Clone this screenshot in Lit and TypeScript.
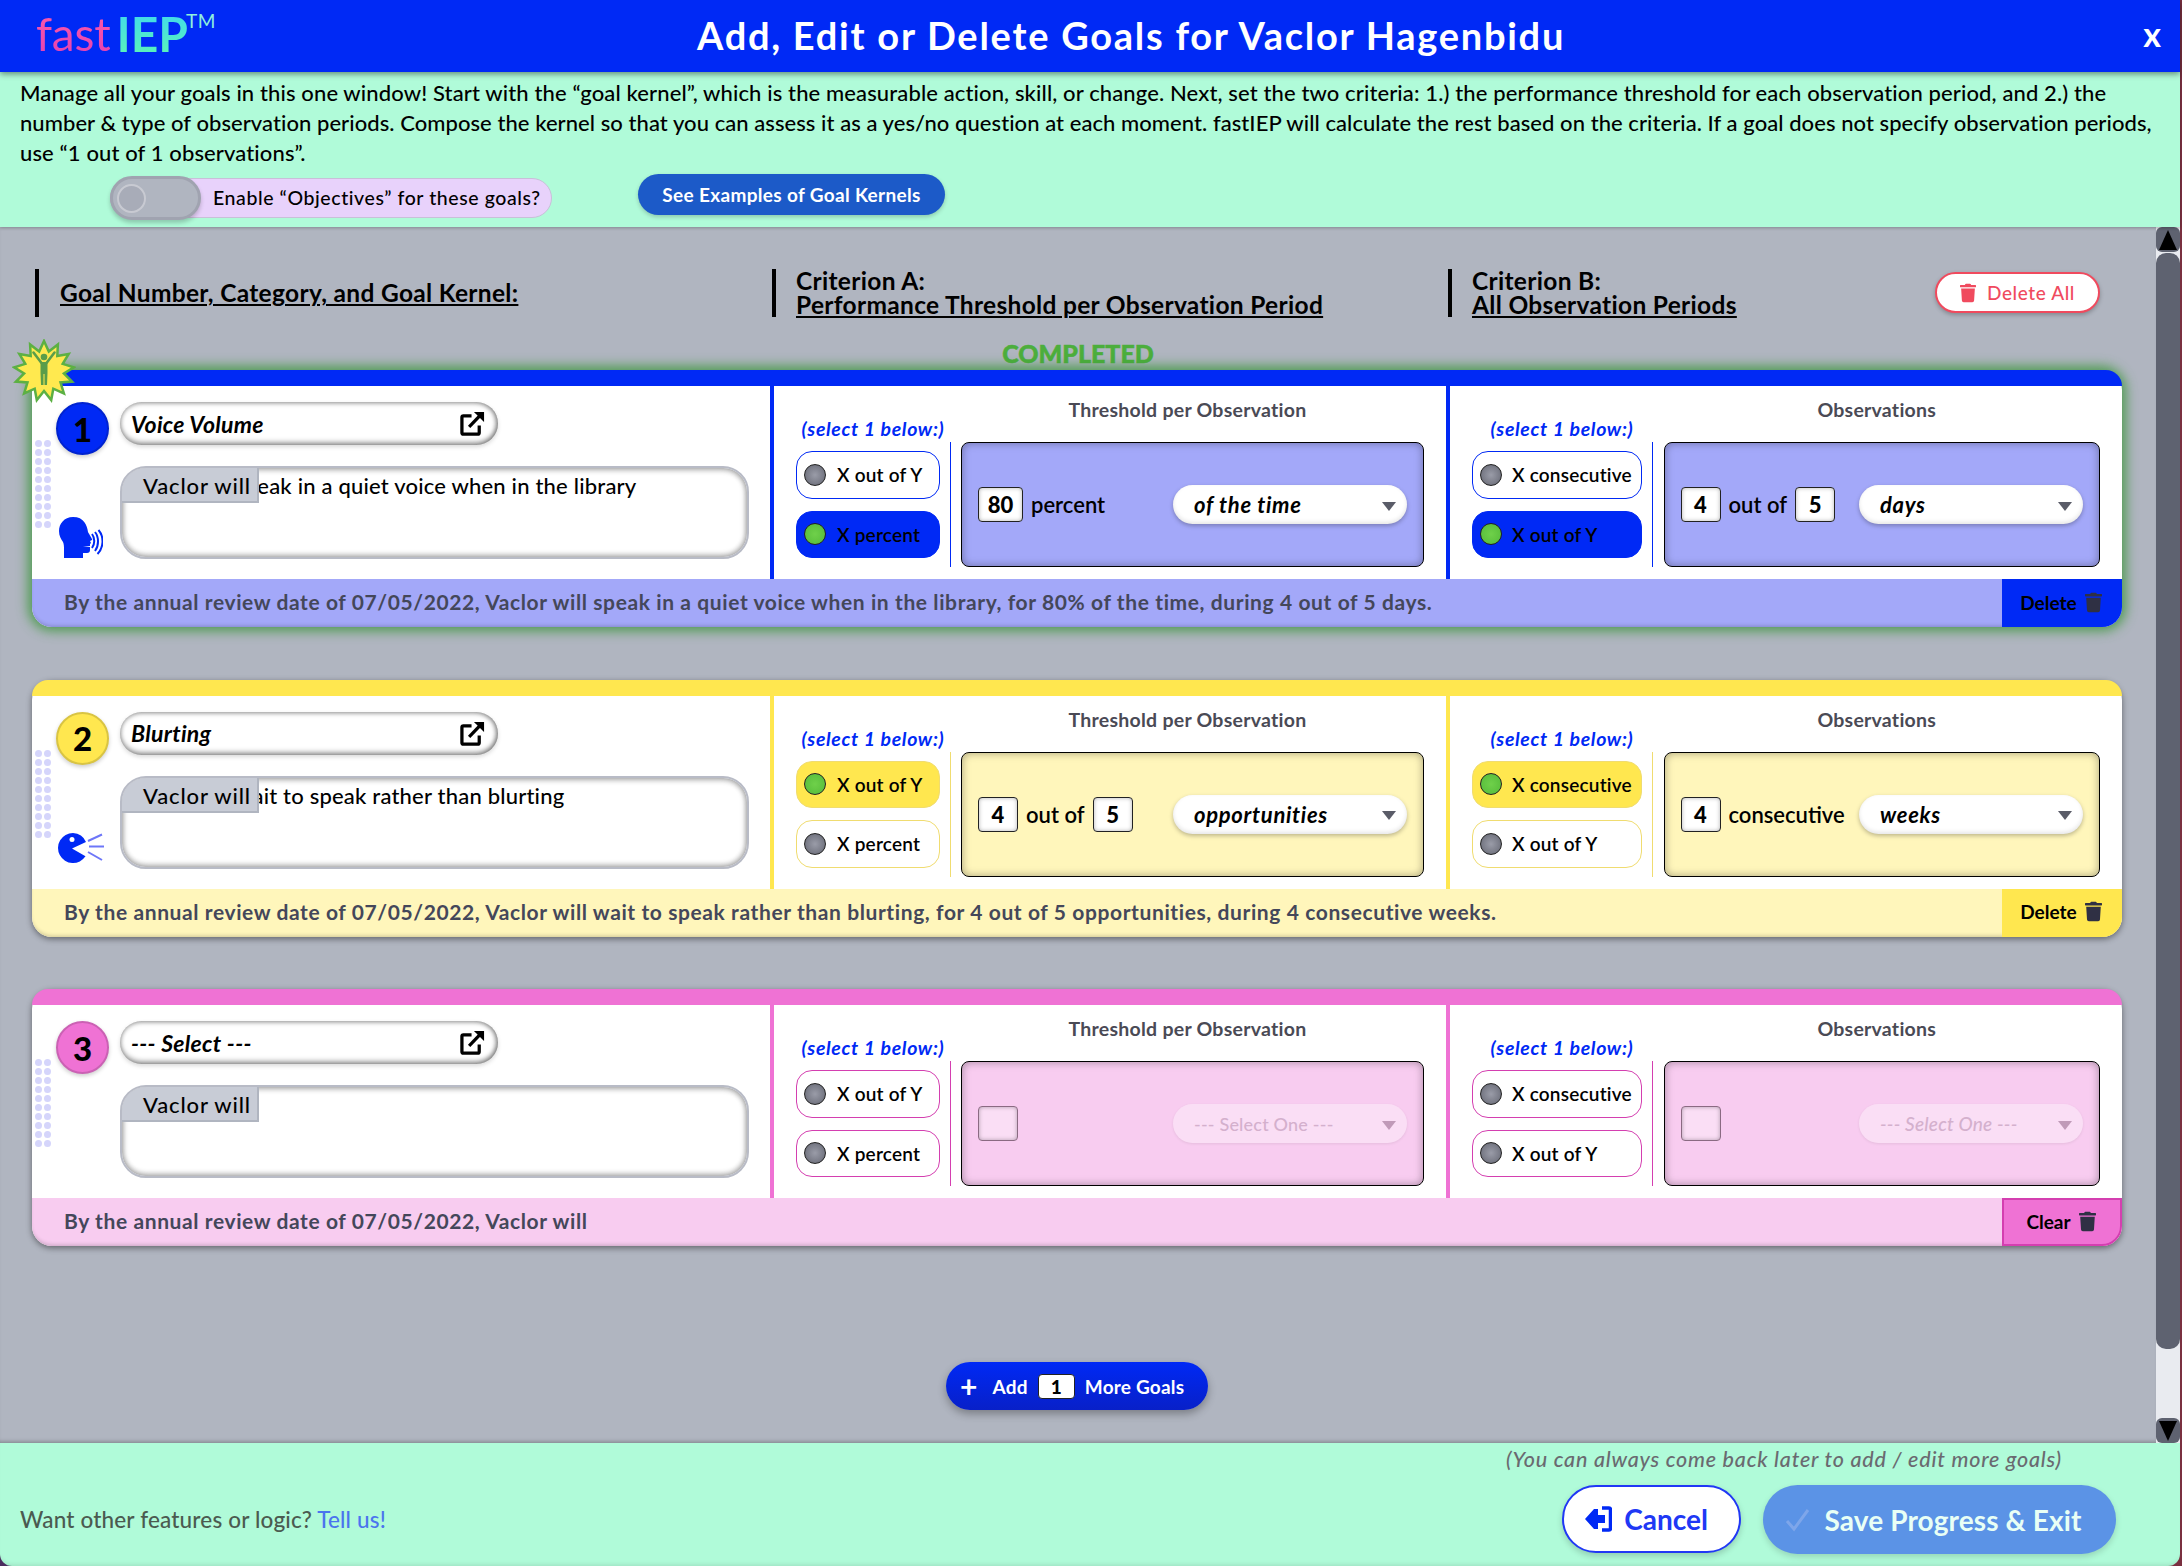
import { LitElement, html, css, svg } from "lit";
import { customElement } from "lit/decorators.js";

const trash = html`<svg class="trash" viewBox="0 0 448 512"><path fill="currentColor" d="M432 32H312l-9.4-18.7A24 24 0 0 0 281.1 0H166.8a23.72 23.72 0 0 0-21.4 13.3L136 32H16A16 16 0 0 0 0 48v32a16 16 0 0 0 16 16h416a16 16 0 0 0 16-16V48a16 16 0 0 0-16-16zM53.2 467a48 48 0 0 0 47.9 45h245.8a48 48 0 0 0 47.9-45L416 128H32z"/></svg>`;

const extLink = html`<svg class="ext" viewBox="0 0 26 26" fill="none" stroke="#000" stroke-width="3.4"><path d="M12 5H3.500a1.500 1.500 0 0 0-1.500 1.500V22.500A1.500 1.500 0 0 0 3.500 24H18.500a1.500 1.500 0 0 0 1.500-1.500V15"/><path d="M9.500 16.500 L21 4.500"/><path d="M14.500 1 H25 V11.500 Z" stroke="none" fill="#000"/></svg>`;

const headIcon = html`<svg class="cat-icon" viewBox="0 0 44 42"><path fill="#0029f5" d="M14 0C5 0 0 7 0 14c0 5 2 8 4 11 1 2 1 5 1 8v8h19v-5h4c2 0 3-1 3-3v-3l-7-1h7v-2l1-1-1-2 2-1c1 0-3-6-4-8C28 8 25 0 14 0z"/><g fill="none" stroke="#0029f5" stroke-width="2"><path d="M33 17c3 4 3 10 0 14" /><path d="M36 15c4 5 4 14 0 19" /><path d="M39.500 13c6 7 5 18 -1 24" /></g></svg>`;

const blurtIcon = html`<svg class="cat-icon blurt" viewBox="0 0 47 31"><path fill="#0029f5" d="M15 0a15 15 0 1 0 12.500 23.300L14 15.500l14-6.500A15 15 0 0 0 15 0z"/><circle cx="14" cy="6.500" r="2.500" fill="#fff"/><g stroke="#6d76f8" stroke-width="2"><path d="M30 8 L44 1.500"/><path d="M31 13.500 H46"/><path d="M30 19 L44 27"/></g></svg>`;

const badge = (() => {
  const pts: string[] = [];
  const n = 13;
  for (let i = 0; i < n * 2; i++) {
    const r = i % 2 === 0 ? 30 : 20;
    const a = (Math.PI * i) / n - Math.PI / 2;
    pts.push(`${(32 + r * Math.cos(a)).toFixed(1)},${(32 + r * Math.sin(a)).toFixed(1)}`);
  }
  return html`<svg class="badge" viewBox="0 0 64 64">
    <polygon points=${pts.join(" ")} fill="#ffe94f" stroke="#5cb043" stroke-width="2.500"/>
    ${svg`<circle cx="32" cy="18" r="3.300" fill="#5a9d4a"/>
    <path d="M21.500 13.500 L29.500 24 M42.500 13.500 L34.500 24" fill="none" stroke="#5a9d4a" stroke-width="2.600" stroke-linecap="round"/>
    <path d="M28.500 23 H35.500 V34 L35 46 H32.500 V35 H31.500 V46 H29 L28.500 34 Z" fill="#5a9d4a"/>`}
  </svg>`;
})();

interface Crit {
  opts: [string, string];
  sel: number;
  title: string;
  inputs: string[];
  joiners: string[];
  select: string;
}
interface Goal {
  n: number;
  theme: string;
  complete?: boolean;
  cat: string;
  kernel: string;
  icon: unknown;
  a: Crit;
  b: Crit;
  summary: string;
  action: string;
}

const goals: Goal[] = [
  {
    n: 1, theme: "blue", complete: true, cat: "Voice Volume",
    kernel: "speak in a quiet voice when in the library", icon: headIcon,
    a: { opts: ["X out of Y", "X percent"], sel: 1, title: "Threshold per Observation", inputs: ["80"], joiners: ["percent"], select: "of the time" },
    b: { opts: ["X consecutive", "X out of Y"], sel: 1, title: "Observations", inputs: ["4", "5"], joiners: ["out of"], select: "days" },
    summary: "By the annual review date of 07/05/2022, Vaclor will speak in a quiet voice when in the library, for 80% of the time, during 4 out of 5 days.",
    action: "Delete",
  },
  {
    n: 2, theme: "yellow", cat: "Blurting",
    kernel: "wait to speak rather than blurting", icon: blurtIcon,
    a: { opts: ["X out of Y", "X percent"], sel: 0, title: "Threshold per Observation", inputs: ["4", "5"], joiners: ["out of"], select: "opportunities" },
    b: { opts: ["X consecutive", "X out of Y"], sel: 0, title: "Observations", inputs: ["4"], joiners: ["consecutive"], select: "weeks" },
    summary: "By the annual review date of 07/05/2022, Vaclor will wait to speak rather than blurting, for 4 out of 5 opportunities, during 4 consecutive weeks.",
    action: "Delete",
  },
  {
    n: 3, theme: "pink", cat: "--- Select ---",
    kernel: "", icon: null,
    a: { opts: ["X out of Y", "X percent"], sel: -1, title: "Threshold per Observation", inputs: [""], joiners: [], select: "" },
    b: { opts: ["X consecutive", "X out of Y"], sel: -1, title: "Observations", inputs: [""], joiners: [], select: "" },
    summary: "By the annual review date of 07/05/2022, Vaclor will",
    action: "Clear",
  },
];

@customElement("app-root")
export class AppRoot extends LitElement {
  static styles = css`
    :host {
      display: block;
      width: 2182px;
      height: 1566px;
      background: linear-gradient(90deg, #4a2d5e, #7a3040);
      font-family: "Lato", "Noto Sans", sans-serif;
      color: #000;
      overflow: hidden;
    }
    * { box-sizing: border-box; }
    .modal { width: 2180px; height: 1566px; display: flex; flex-direction: column; }

    .topbar {
      height: 72px; flex: none; background: #0029f5; position: relative; z-index: 3;
      box-shadow: 0 2px 6px rgba(0,0,0,.45);
      display: flex; align-items: center; justify-content: center; padding: 0 0 3px 82px;
    }
    .logo { position: absolute; left: 36px; top: 9px; font-size: 46px; line-height: 50px; display: flex; }
    .logo .fast { background: linear-gradient(#ff5ca8, #e23fb4); -webkit-background-clip: text; background-clip: text; color: transparent; margin-right: 6px; letter-spacing: -.2px; }
    .logo .iep { background: linear-gradient(#3fd8f0, #5cf5b4); -webkit-background-clip: text; background-clip: text; color: transparent; font-weight: 700; font-size: 48px; }
    .logo sup { font-size: 19px; line-height: 24px; color: #8ff0dc; font-weight: 400; margin-top: 0; margin-left: -2px; letter-spacing: .5px; }
    .title { color: #fff; font-size: 38px; font-weight: 700; letter-spacing: 1.74px; white-space: nowrap; }
    .close { position: absolute; right: 19px; top: 12px; color: #fff; font-size: 34px; font-weight: 700; line-height: 44px; }

    .intro { height: 155px; flex: none; background: #b0fbd9; padding: 6px 20px 0 20px; position: relative; z-index: 2; box-shadow: 0 1px 3px rgba(0,0,0,.25); }
    .intro p { margin: 0; font-size: 22px; line-height: 30px; font-weight: 500; letter-spacing: .12px; white-space: nowrap; }
    .intro p.tight { letter-spacing: .06px; }
    .intro-row { display: flex; align-items: center; margin: 9px 0 0 90px; }
    .toggle { width: 442px; height: 40px; display: flex; align-items: center; position: relative; background: #e8d2fb; border: 1.5px solid #c8c0d8; border-radius: 20px; padding-left: 102px; font-size: 19.500px; font-weight: 500; letter-spacing: .58px; white-space: nowrap; }
    .knob-track { position: absolute; left: -1.500px; top: -3px; width: 91px; height: 44px; border-radius: 22px; background: #b0b5c0; border: 3px solid #a0a3b0; box-shadow: 0 3px 4px rgba(0,0,0,.2); }
    .knob { position: absolute; left: 4px; top: 5px; width: 29px; height: 29px; border-radius: 50%; background: #a8acb8; border: 2px solid #c8cad2; }
    .examples { margin-left: 86px; width: 307px; height: 41px; border-radius: 21px; background: #1c5ac8; color: #fff; font-size: 19px; font-weight: 700; letter-spacing: .33px; display: flex; align-items: center; justify-content: center; box-shadow: 0 2px 4px rgba(0,0,0,.2); position: relative; top: -3px; }

    .middle { flex: 1; min-height: 0; display: flex; background: #b0b5c0; }
    .content { width: 2156px; padding-top: 42px; position: relative; overflow: hidden; box-shadow: inset 0 -4px 4px -3px rgba(0,0,0,.3); }
    .heads { display: flex; margin-left: 35px; height: 48px; }
    .heads > div { border-left: 4px solid #000; padding-left: 21px; font-size: 24.500px; font-weight: 700; line-height: 24px; letter-spacing: .32px; white-space: nowrap; }
    .heads > div:nth-child(1) { width: 737px; display: flex; align-items: center; }
    .heads > div:nth-child(2) { width: 676px; padding-left: 20px; }
    .heads > div:nth-child(3) { width: 652px; padding-left: 20px; display: flex; justify-content: space-between; }
    .u { text-decoration: underline; text-decoration-thickness: 2px; text-underline-offset: 2px; }
    .del-all { width: 165px; height: 41px; margin-top: 3px; border-radius: 21px; background: #fff; border: 2px solid #f04a5e; color: #f04a5e; font-size: 19px; font-weight: 500; letter-spacing: .6px; display: flex; align-items: center; justify-content: center; gap: 11px; box-shadow: 0 2px 4px rgba(0,0,0,.25); }
    .del-all .trash { width: 16px; height: 20px; }
    .completed { margin-top: 22px; height: 31px; line-height: 28px; text-align: center; color: #4cae3c; font-size: 25px; font-weight: 900; -webkit-text-stroke: .5px #4cae3c; }
    .trash { width: 17px; height: 21px; }

    .card { width: 2090px; margin: 0 0 52.500px 32px; height: 257px; border-radius: 20px; display: flex; flex-direction: column; position: relative; background: #fff; box-shadow: 0 2px 6px rgba(0,0,0,.45); --main: #0029f5; --soft: #a3a8f9; --edge: #0029f5; }
    .card.done { box-shadow: 0 0 12px 4px rgba(62,150,62,.85); }
    .card.yellow { --main: #ffe74f; --soft: #fff6bb; --edge: #f0dc70; }
    .card.pink { --main: #ef72d4; --soft: #f8ccf0; --edge: #d43fb0; }
    .stripe { height: 16px; flex: none; background: var(--main); border-radius: 20px 20px 0 0; }
    .badge { position: absolute; left: -20px; top: -31px; width: 64px; height: 64px; z-index: 2; }
    .body { height: 193px; flex: none; display: grid; grid-template-columns: 738px 676px 676px; }

    .col1 { position: relative; padding: 16px 0 0 24px; display: grid; grid-template-columns: 53px 629px; column-gap: 11px; grid-template-rows: 43px 93px; row-gap: 21px; }
    .num { width: 53px; height: 53px; border-radius: 50%; background: var(--main); border: 2px solid color-mix(in srgb, var(--main) 85%, #000); display: flex; align-items: center; justify-content: center; font-size: 33px; font-weight: 900; box-shadow: 0 2px 4px rgba(0,0,0,.2); }
    .cat { width: 378px; height: 43px; border-radius: 22px; background: #fff; box-shadow: inset 0 -3px 5px rgba(0,0,0,.35), inset 0 2px 4px rgba(0,0,0,.25), inset -3px 0 4px rgba(0,0,0,.2), 0 2px 4px rgba(0,0,0,.15); display: flex; align-items: center; justify-content: space-between; padding: 0 13px 0 11px; font-style: italic; font-weight: 700; font-size: 23px; letter-spacing: .3px; }
    .ext { width: 25px; height: 25px; }
    .icon-cell { align-self: end; display: flex; justify-content: center; }
    .cat-icon { width: 44px; height: 42px; margin-left: -3px; }
    .cat-icon.blurt { width: 47px; height: 31px; margin-bottom: 5px; }
    .kernel { position: relative; border-radius: 26px; border: 2px solid #b8bbc6; background: #fff; overflow: hidden; padding: 0 0 0 113px; font-size: 22px; font-weight: 500; line-height: 36px; letter-spacing: .2px; box-shadow: inset 0 3px 5px rgba(0,0,0,.2), inset 0 -3px 5px rgba(0,0,0,.2), inset 3px 0 5px rgba(0,0,0,.12), inset -3px 0 5px rgba(0,0,0,.12); white-space: nowrap; }
    .prefix { position: absolute; left: 0; top: 0; width: 137px; height: 35px; background: #c8ccd6; border-right: 2px solid #b0b5c0; border-bottom: 2px solid #b0b5c0; padding-left: 21px; font-size: 22px; font-weight: 500; line-height: 36px; letter-spacing: .85px; }
    .grip { position: absolute; left: 2px; top: 53px; width: 18px; height: 90px; display: grid; grid-template-columns: 9px 9px; grid-auto-rows: 9px; }
    .grip i { width: 7px; height: 7px; border-radius: 50%; background: #d5d5fb; margin: 1px; }

    .crit { border-left: 4px solid var(--main); padding-left: 22px; display: grid; grid-template-rows: 56px 126px; }
    .crit.a { grid-template-columns: 144px 21px 463px; }
    .crit.b { grid-template-columns: 170px 21.500px 436.500px; }
    .sel1 { grid-column: 1; align-self: end; justify-self: center; text-align: center; color: #0029f5; font-size: 19.500px; font-style: italic; font-weight: 700; line-height: 24px; letter-spacing: .65px; padding: 0 0 1px 10px; white-space: nowrap; }
    .crit-title { grid-column: 3; text-align: center; padding: 12px 10px 0 0; font-size: 19.500px; font-weight: 700; line-height: 24px; letter-spacing: .25px; color: #4a4a55; }
    .radios { grid-column: 1; padding-top: 9px; display: flex; flex-direction: column; gap: 12px; }
    .radio { height: 47.500px; border: 1.500px solid var(--edge); border-radius: 16px; background: #fff; display: flex; align-items: center; padding-left: 7px; gap: 11px; font-size: 19px; font-weight: 600; letter-spacing: .2px; white-space: nowrap; }
    .crit.b .radio { gap: 10px; }
    .radio.on { background: var(--main); border-color: var(--main); }
    .card.yellow .radio.on { border-color: #f0dc70; }
    .led { width: 22px; height: 22px; border-radius: 50%; flex: none; background: radial-gradient(circle, #9a9ca8 0%, #7a7c88 60%, #55565f 100%); border: 1.500px solid #222; }
    .radio.on .led { background: radial-gradient(circle, #6fd04a 0%, #5cc13e 70%, #3f9a2a 100%); }
    .vline { grid-column: 2; width: 1px; background: var(--edge); height: 125px; margin-left: 10px; }
    .panel { grid-column: 3; height: 125px; border: 1.500px solid #000; border-radius: 8px; background: var(--soft); box-shadow: inset 0 0 8px rgba(0,0,0,.35); display: flex; align-items: center; padding: 0 16px; font-size: 22px; font-weight: 600; }
    .box { width: 40px; height: 35px; border: 1.500px solid #222; border-radius: 4px; background: #fff; box-shadow: inset 0 0 4px rgba(0,0,0,.3); font-weight: 900; display: flex; align-items: center; justify-content: center; flex: none; }
    .box.wide { width: 45px; }
    .join { margin: 0 8px; white-space: nowrap; }
    .sel { margin-left: auto; height: 39px; border-radius: 20px; background: #fff; box-shadow: 0 2px 4px rgba(0,0,0,.25), inset 0 -2px 4px rgba(0,0,0,.1); display: flex; align-items: center; justify-content: space-between; padding: 0 11px 0 21px; font-style: italic; font-weight: 700; letter-spacing: .7px; white-space: nowrap; }
    .crit.a .sel { width: 234px; }
    .crit.b .sel { width: 224px; padding-left: 21px; }
    .arrow { width: 0; height: 0; border-left: 7.500px solid transparent; border-right: 7.500px solid transparent; border-top: 9px solid #5a5c68; margin-top: 3px; }
    .panel.empty .box { background: rgba(255,255,255,.35); border-color: #8a6a82; }
    .panel.empty .sel { background: rgba(255,255,255,.35); color: #d4b0cd; font-size: 19px; font-weight: 500; box-shadow: 0 1px 3px rgba(0,0,0,.08); letter-spacing: .2px; }
    .panel.empty .arrow { border-top-color: #c09ab8; }
    .crit.a .panel.empty .sel { font-style: normal; font-size: 18px; }

    .sum { height: 48px; flex: none; background: var(--soft); border-radius: 0 0 20px 20px; display: flex; align-items: stretch; justify-content: space-between; padding-left: 32px; box-shadow: inset 0 -3px 4px -2px rgba(0,0,0,.2); }
    .sum .txt { align-self: center; margin-top: -3px; color: #44475a; font-size: 21px; font-weight: 700; letter-spacing: .6px; white-space: nowrap; }
    .act { width: 120px; background: var(--main); border-radius: 0 0 20px 0; display: flex; align-items: center; justify-content: center; gap: 8px; font-size: 19px; font-weight: 700; color: #000; padding: 0 2px 2px 0; }
    .act .trash { color: #2f3044; }
    .card.pink .act { border: 2px solid var(--edge); border-radius: 0 0 20px 0; }

    .add-wrap { display: flex; justify-content: center; margin-top: 116px; transform: translateX(-1px); }
    .add { width: 262px; height: 48px; border-radius: 24px; background: linear-gradient(#0029f5, #0820c8); color: #fff; display: flex; align-items: center; justify-content: flex-start; padding-left: 14px; font-size: 19px; font-weight: 700; box-shadow: 0 4px 8px rgba(0,0,0,.3); gap: 10px; letter-spacing: .2px; }
    .add .plus { font-size: 30px; line-height: 30px; font-weight: 700; margin-right: 5px; }
    .add .n { width: 37px; height: 25px; background: #fff; color: #000; border-radius: 4px; display: flex; align-items: center; justify-content: center; font-weight: 900; border: 1px solid #222; }

    .scroll { width: 24px; flex: none; background: #e9ebf0; display: flex; flex-direction: column; }
    .sbtn { height: 25px; flex: none; background: #5e6270; border-radius: 6px; display: flex; align-items: center; justify-content: center; }
    .sbtn i { width: 0; height: 0; border-left: 9px solid transparent; border-right: 9px solid transparent; }
    .sbtn.up i { border-bottom: 20px solid #000; }
    .sbtn.down i { border-top: 20px solid #000; }
    .thumb { height: 1096px; margin-top: 1px; background: #5e6270; border-radius: 10px; flex: none; }
    .spacer { flex: 1; }

    .bottom { height: 123px; flex: none; background: #b0fbd9; border-radius: 0 0 12px 12px; position: relative; display: flex; align-items: flex-end; justify-content: space-between; padding: 0 64px 12px 20px; box-shadow: inset 0 -5px 5px -4px rgba(0,0,0,.12); }
    .want { font-size: 22.500px; font-weight: 500; letter-spacing: .17px; color: #4b5a50; margin-bottom: 21px; }
    .want a { color: #4a74ee; }
    .note { position: absolute; left: 1506px; top: 3px; font-size: 21.500px; font-style: italic; color: #6a6a70; font-weight: 500; letter-spacing: .8px; white-space: nowrap; }
    .btns { display: flex; gap: 22px; }
    .cancel { width: 179px; height: 68px; border-radius: 34px; background: #fff; border: 2.500px solid #2038f5; color: #2038f5; display: flex; align-items: center; justify-content: center; gap: 12px; padding-right: 10px; font-size: 28px; font-weight: 700; box-shadow: 0 3px 6px rgba(0,0,0,.18); }
    .cancel svg { width: 27px; height: 26px; }
    .save { width: 353px; height: 69px; border-radius: 35px; background: #5b93e6; color: #e8fff5; display: flex; align-items: center; justify-content: center; gap: 14px; padding-right: 12px; font-size: 28px; font-weight: 700; letter-spacing: .12px; box-shadow: 0 3px 6px rgba(0,0,0,.15); }
    .save svg { width: 25px; height: 25px; }
  `;

  private crit(c: Crit, cls: string) {
    const empty = c.sel < 0;
    return html`<div class="crit ${cls}">
      <div class="sel1">(select 1 below:)</div>
      <div class="crit-title">${c.title}</div>
      <div class="radios">
        ${c.opts.map((o, i) => html`<div class="radio ${i === c.sel ? "on" : ""}"><span class="led"></span>${o}</div>`)}
      </div>
      <div class="vline"></div>
      <div class="panel ${empty ? "empty" : ""}">
        <span class="box ${c.inputs[0] === "80" ? "wide" : ""}">${c.inputs[0]}</span>
        ${c.joiners[0] ? html`<span class="join">${c.joiners[0]}</span>` : ""}
        ${c.inputs[1] ? html`<span class="box">${c.inputs[1]}</span>` : ""}
        <div class="sel"><span>${empty ? "--- Select One ---" : c.select}</span><span class="arrow"></span></div>
      </div>
    </div>`;
  }

  private card(g: Goal) {
    return html`<div class="card ${g.theme} ${g.complete ? "done" : ""}">
      ${g.complete ? badge : ""}
      <div class="stripe"></div>
      <div class="body">
        <div class="col1">
          <div class="grip">${Array.from({ length: 20 }, () => html`<i></i>`)}</div>
          <div class="num">${g.n}</div>
          <div class="cat"><span>${g.cat}</span>${extLink}</div>
          <div class="icon-cell">${g.icon}</div>
          <div class="kernel">${g.kernel}<div class="prefix">Vaclor will</div></div>
        </div>
        ${this.crit(g.a, "a")}
        ${this.crit(g.b, "b")}
      </div>
      <div class="sum"><span class="txt">${g.summary}</span><div class="act">${g.action} ${trash}</div></div>
    </div>`;
  }

  render() {
    return html`<div class="modal">
      <div class="topbar">
        <div class="logo"><span class="fast">fast</span><span class="iep">IEP</span><sup>TM</sup></div>
        <div class="title">Add, Edit or Delete Goals for Vaclor Hagenbidu</div>
        <div class="close">x</div>
      </div>
      <div class="intro">
        <p>Manage all your goals in this one window! Start with the “goal kernel”, which is the measurable action, skill, or change. Next, set the two criteria: 1.) the performance threshold for each observation period, and 2.) the</p>
        <p class="tight">number &amp; type of observation periods. Compose the kernel so that you can assess it as a yes/no question at each moment. fastIEP will calculate the rest based on the criteria. If a goal does not specify observation periods,</p>
        <p>use “1 out of 1 observations”.</p>
        <div class="intro-row">
          <div class="toggle"><div class="knob-track"><div class="knob"></div></div>Enable “Objectives” for these goals?</div>
          <div class="examples">See Examples of Goal Kernels</div>
        </div>
      </div>
      <div class="middle">
        <div class="content">
          <div class="heads">
            <div><span class="u">Goal Number, Category, and Goal Kernel:</span></div>
            <div>Criterion A:<br /><span class="u">Performance Threshold per Observation Period</span></div>
            <div><span>Criterion B:<br /><span class="u">All Observation Periods</span></span><div class="del-all">${trash} Delete All</div></div>
          </div>
          <div class="completed">COMPLETED</div>
          ${goals.map((g) => this.card(g))}
          <div class="add-wrap"><div class="add"><span class="plus">+</span><span>Add</span><span class="n">1</span><span>More Goals</span></div></div>
        </div>
        <div class="scroll">
          <div class="sbtn up"><i></i></div>
          <div class="thumb"></div>
          <div class="spacer"></div>
          <div class="sbtn down"><i></i></div>
        </div>
      </div>
      <div class="bottom">
        <div class="want">Want other features or logic? <a>Tell us!</a></div>
        <div class="note">(You can always come back later to add / edit more goals)</div>
        <div class="btns">
          <div class="cancel"><svg viewBox="0 0 27 26"><path fill="#0029f5" d="M0 13 9 3h4v6h7v8h-7v6H9z"/><path fill="none" stroke="#0029f5" stroke-width="3.500" d="M17 2h7a1.500 1.500 0 0 1 1.500 1.500v19A1.500 1.500 0 0 1 24 24h-7"/></svg>Cancel</div>
          <div class="save"><svg viewBox="0 0 25 25"><path fill="none" stroke="#7ea6ea" stroke-width="3" d="M2 14 9 22 23 3"/></svg>Save Progress &amp; Exit</div>
        </div>
      </div>
    </div>`;
  }
}
